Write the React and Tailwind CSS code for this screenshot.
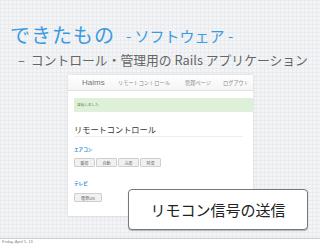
const jp = { fontFamily: '"Noto Sans CJK JP", "Noto Sans", sans-serif' };

function Btn({ children, w = "w-[21px]" }) {
  return (
    <div className={`${w} h-[9px] flex items-center justify-center rounded-[1px] border border-[#cfcfcf] bg-[#f1f1f1] text-[4px] leading-none text-[#666] whitespace-nowrap`}>
      {children}
    </div>
  );
}

function Panel() {
  return (
    <div className="ml-[68px] w-[185px] h-[141px] mt-[6px] bg-white shadow-[0_0_3px_rgba(0,0,0,0.12)] flex flex-col">
      <div className="h-[16px] flex items-center pl-[14px] bg-gradient-to-b from-white to-[#f5f5f5] border-b border-[#e2e2e2] text-[#888] whitespace-nowrap">
        <span className="w-[36px] text-[8px] leading-none text-[#777]" style={{ fontFamily: '"Liberation Sans", sans-serif' }}>Haims</span>
        <span className="w-[67px] text-[5.2px] leading-none">リモートコントロール</span>
        <span className="w-[38px] text-[5.2px] leading-none">管理ページ</span>
        <span className="text-[5.2px] leading-none">ログアウト</span>
      </div>
      <div className="pl-[6px] flex flex-col">
        <div className="mt-[7px] h-[14px] bg-[#dff0d8] flex items-center pl-[3px] text-[3.6px] leading-none text-[#468847]">
          送信しました
        </div>
        <div className="mt-[12px] pb-[2px] mr-[10px] border-b border-[#eee] text-[8.2px] leading-[10px] text-[#333]">
          リモートコントロール
        </div>
        <div className="mt-[9px] text-[4.6px] leading-[6px] font-bold text-[#2a8ad4]">エアコン</div>
        <div className="mt-[6px] flex gap-[1px]">
          <Btn>暖房</Btn>
          <Btn>自動</Btn>
          <Btn>冷房</Btn>
          <Btn>除湿</Btn>
        </div>
        <div className="mt-[13px] text-[4.6px] leading-[6px] font-bold text-[#2a8ad4]">テレビ</div>
        <div className="mt-[7px] flex">
          <Btn w="w-[28px]">電源ON</Btn>
        </div>
      </div>
    </div>
  );
}

export default function App() {
  return (
    <div className="w-[320px] h-[246px] bg-white overflow-hidden" style={jp}>
      <div className="relative h-[239px] border-b border-[#cdced0] bg-[#f3f4f6] bg-[linear-gradient(to_right,#e9ebee_1px,transparent_1px),linear-gradient(to_bottom,#e9ebee_1px,transparent_1px)] bg-[size:4px_4px] pt-[24px]">
        <div className="pl-[10px] h-[22px] flex items-center text-[#3b9be0] whitespace-nowrap">
          <span className="text-[20px] leading-none tracking-[1px]">できたもの</span>
          <span className="ml-[11px] text-[15px] leading-none">- ソフトウェア -</span>
        </div>
        <div className="mt-[5px] pl-[18px] h-[18px] flex items-center text-[12.8px] leading-none text-[#666] whitespace-nowrap">
          <span className="mr-[6px]">–</span>
          <span>コントロール・管理用の Rails アプリケーション</span>
        </div>
        <Panel />
        <div className="absolute left-[128px] top-[189px] w-[180px] h-[41px] rounded-[4px] border border-[#777] bg-white shadow-[0_1px_1px_rgba(0,0,0,0.25)] flex items-center justify-center text-[15px] leading-none text-[#222]">
          リモコン信号の送信
        </div>
      </div>
      <div className="pl-[2px] pt-[1px] text-[4px] leading-none text-[#888]" style={{ fontFamily: '"Liberation Sans", sans-serif' }}>
        Friday, April 5, 13
      </div>
    </div>
  );
}
